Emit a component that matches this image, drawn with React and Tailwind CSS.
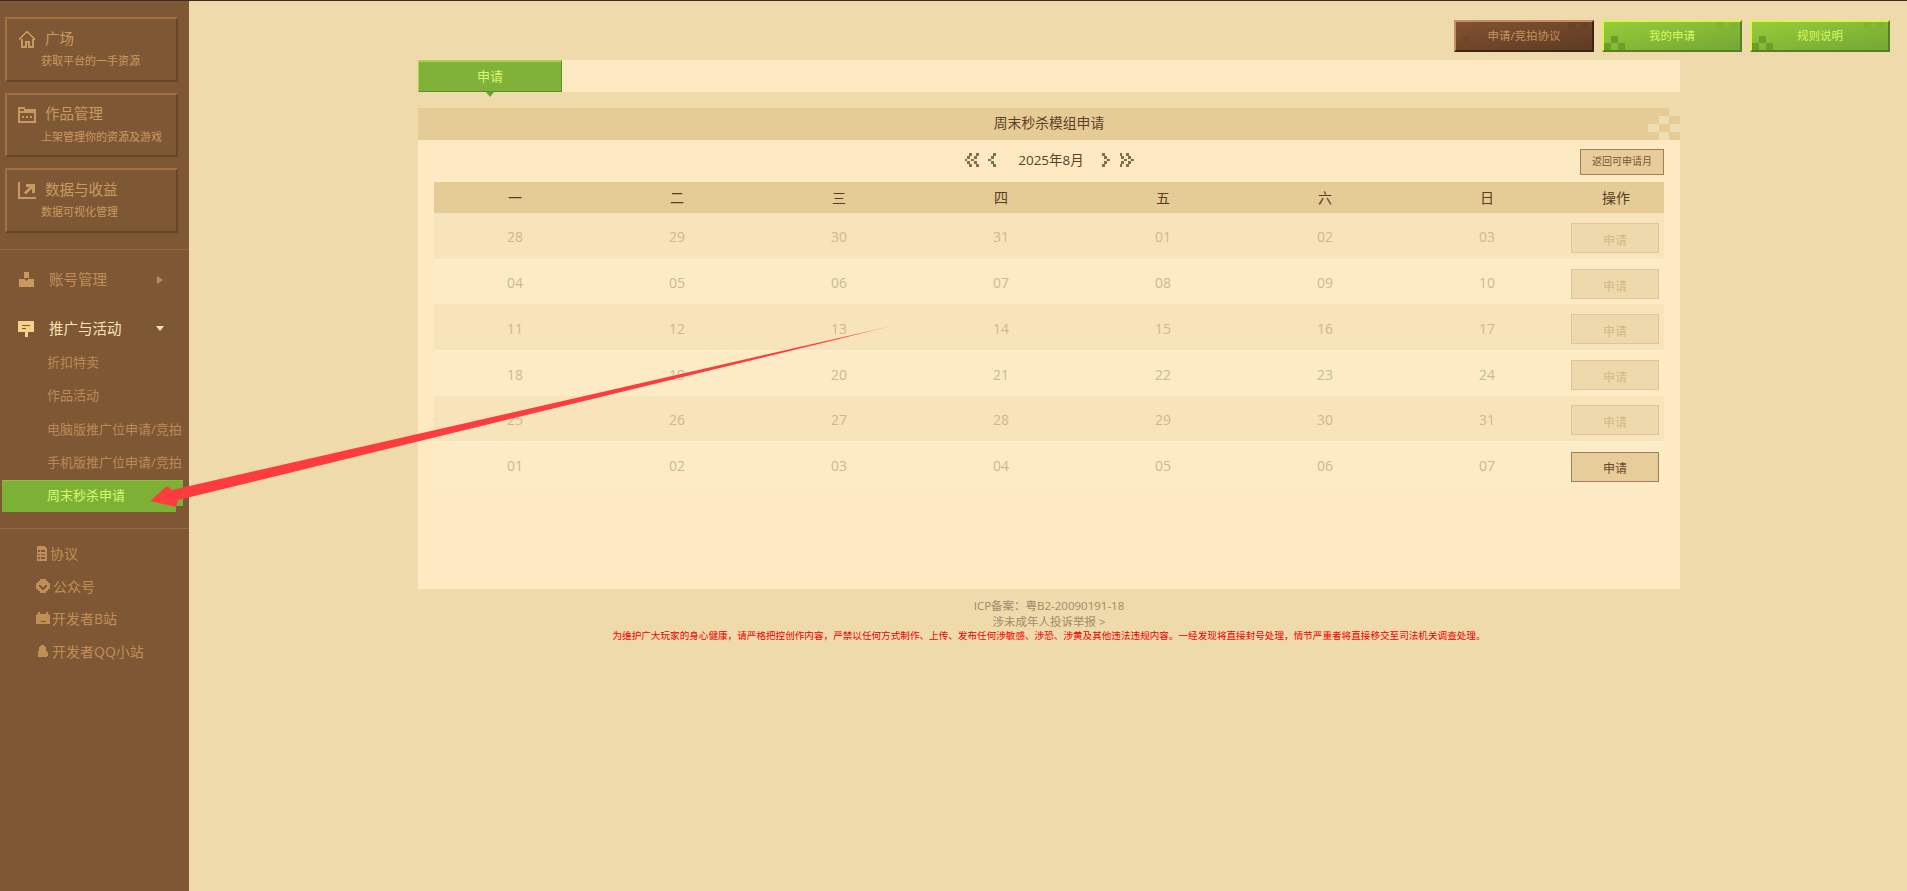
import React from 'react'

const cards = [
  { title: '广场', sub: '获取平台的一手资源', icon: 'home' },
  { title: '作品管理', sub: '上架管理你的资源及游戏', icon: 'folder' },
  { title: '数据与收益', sub: '数据可视化管理', icon: 'chart' },
]

const subMenu = ['折扣特卖', '作品活动', '电脑版推广位申请/竞拍', '手机版推广位申请/竞拍']

const weeks = [
  ['28', '29', '30', '31', '01', '02', '03'],
  ['04', '05', '06', '07', '08', '09', '10'],
  ['11', '12', '13', '14', '15', '16', '17'],
  ['18', '19', '20', '21', '22', '23', '24'],
  ['25', '26', '27', '28', '29', '30', '31'],
  ['01', '02', '03', '04', '05', '06', '07'],
]

const dayNames = ['一', '二', '三', '四', '五', '六', '日']

// 像素风图标
function Icon({ name, className }) {
  const common = { className, viewBox: '0 0 18 18', fill: 'currentColor', shapeRendering: 'crispEdges' }
  if (name === 'home') {
    return (
      <svg {...common} fill="none" stroke="currentColor" strokeWidth="2">
        <path d="M1 9.500 9 1.500l8 8" />
        <path d="M3.500 9v7.500h4v-5h3v5h4V9" />
      </svg>
    )
  }
  if (name === 'folder') {
    return (
      <svg {...common}>
        <path d="M0 1h7v2h11v14H0zM2 3v2h14V5H6V3zM2 7v8h14V7zM4 10h2v2H4zM8 10h2v2H8zM12 10h2v2h-2z" fillRule="evenodd" />
      </svg>
    )
  }
  if (name === 'chart') {
    return (
      <svg {...common}>
        <path d="M0 1h2v15h16v2H0zM8 3h9v9h-3V7.500l-6 6-2-2 6-6H8z" />
      </svg>
    )
  }
  if (name === 'account') {
    return (
      <svg {...common}>
        <path d="M6 0h6v7H6zM0 8h6l3 3 3-3h6v10H0z" />
      </svg>
    )
  }
  if (name === 'sign') {
    return (
      <svg {...common}>
        <path d="M0 0h18v12h-7v6H8v-6H0zM4 4v2h10V4zM4 8v1h5V8z" fillRule="evenodd" />
      </svg>
    )
  }
  if (name === 'doc') {
    return (
      <svg {...common}>
        <path d="M3 0h9l3 3v15H3zM5 5v2h2V5zM8 5v2h5V5zM5 9v2h2V9zM8 9v2h5V9zM5 13v2h2v-2zM8 13v2h5v-2z" fillRule="evenodd" />
      </svg>
    )
  }
  if (name === 'badge') {
    return (
      <svg {...common}>
        <path d="M6 1h6v2h3v3h2v6h-2v3h-3v2H6v-2H3v-3H1V6h2V3h3zM5 8v2h1v1h1v1h1v1h2v-1h1v-1h1v-1h1V8h-2v1h-1v1h-2V9H7V8z" fillRule="evenodd" />
      </svg>
    )
  }
  if (name === 'bili') {
    return (
      <svg {...common}>
        <path d="M3 1h2v2h1v1h6V3h1V1h2v3h1v1h1v10h-1v1H2v-1H1V5h1V4h1zM3 9v1h4V9zM11 9v1h4V9zM6 12v1h6v-1z" fillRule="evenodd" />
      </svg>
    )
  }
  // qq
  return (
    <svg {...common}>
      <path d="M7 1h4v1h1v2h1v4h1v2h1v4h-1v1h-1v1h-3v-1H8v1H5v-1H4v-1H3v-4h1V8h1V4h1V2h1z" />
    </svg>
  )
}

function Chevron({ dir, double }) {
  const path = dir === 'left'
    ? 'M5 0h3v3H5zM3 3h3v3H3zM0 6h3v3H0zM3 9h3v3H3zM5 12h3v3H5z'
    : 'M0 0h3v3H0zM2 3h3v3H2zM5 6h3v3H5zM2 9h3v3H2zM0 12h3v3H0z'
  return (
    <svg className={`${double ? 'w-[15px]' : 'w-[8px]'} h-[14px] text-[#8b6b4d]`} viewBox={double ? '0 0 15 15' : '0 0 8 15'} fill="currentColor" shapeRendering="crispEdges">
      <path d={path} />
      {double && <path d={path} transform="translate(7 0)" />}
    </svg>
  )
}

function PixelBtn({ children, tone }) {
  const brown = tone === 'brown'
  const shell = brown
    ? 'bg-gradient-to-br from-[#825232] to-[#5e3b22] border-t-[#c48f62] border-l-[#c48f62] border-b-[#3d2413] border-r-[#3d2413] text-[#c4935c]'
    : 'bg-gradient-to-br from-[#97cc38] to-[#74a735] border-t-[#d9f552] border-l-[#d9f552] border-b-[#587f24] border-r-[#587f24] text-[#d9f666]'
  const px = brown ? 'bg-[#6a4226]' : 'bg-[#83b32f]'
  const pxLow = brown ? 'bg-[#6f4629]' : 'bg-[#6f9d2a]'
  return (
    <button className={`relative w-[140px] h-[32px] border-2 text-[11.5px] ${shell}`}>
      {children}
      <span className={`absolute right-[17px] top-0 w-[7px] h-[7px] ${px}`} />
      <span className={`absolute right-[3px] top-0 w-[7px] h-[7px] ${px}`} />
      <span className={`absolute right-[10px] top-[7px] w-[7px] h-[7px] ${px}`} />
      <span className={`absolute left-[7px] bottom-[7px] w-[7px] h-[7px] ${pxLow}`} />
      <span className={`absolute left-0 bottom-0 w-[7px] h-[7px] ${pxLow}`} />
      <span className={`absolute left-[14px] bottom-0 w-[7px] h-[7px] ${pxLow}`} />
    </button>
  )
}

function Sidebar() {
  return (
    <aside className="w-[189px] shrink-0 bg-[#7e5835] flex flex-col pt-[16px]">
      <div className="pl-[5px] flex flex-col gap-[11px]">
        {cards.map(c => (
          <div key={c.title} className="w-[173px] h-[64.500px] border-2 border-t-[#a5703f] border-l-[#a5703f] border-b-[#65462a] border-r-[#65462a] pt-[11px]">
            <div className="flex items-center pl-[11px] h-[18px] text-[#c99a60]">
              <Icon name={c.icon} className="w-[18px] h-[18px]" />
              <span className="ml-[9px] text-[14.5px] leading-none">{c.title}</span>
            </div>
            <div className="pl-[34px] mt-[5px] text-[11px] leading-[16px] text-[#c99a60] whitespace-nowrap">{c.sub}</div>
          </div>
        ))}
      </div>

      <div className="h-px bg-[#98693f] mt-[16px]" />

      <div className="mt-[13px] h-[34px] flex items-center pl-[19px] pr-[26px] text-[#c08f58]">
        <Icon name="account" className="w-[15px] h-[15px] text-[#c9995f]" />
        <span className="ml-[15px] text-[14.5px]">账号管理</span>
        <span className="ml-auto w-0 h-0 border-y-[4px] border-y-transparent border-l-[6px] border-l-[#b58a5a]" />
      </div>

      <div className="mt-[15px] h-[34px] flex items-center pl-[18px] pr-[25px] text-[#f6e4b9]">
        <Icon name="sign" className="w-[16px] h-[16px] text-[#f3d28c]" />
        <span className="ml-[15px] text-[14.5px]">推广与活动</span>
        <span className="ml-auto w-0 h-0 border-x-[4.500px] border-x-transparent border-t-[5px] border-t-[#f6e4b9]" />
      </div>

      <div className="flex flex-col">
        {subMenu.map(s => (
          <div key={s} className="h-[33.500px] flex items-center pl-[47px] text-[13px] text-[#bb8a56] whitespace-nowrap">{s}</div>
        ))}
        <div className="relative ml-[2px] w-[174px] h-[32px] bg-[#7db136] border-t border-t-[#8cbd3f] flex items-center pl-[45px] text-[13px] text-[#d8f870]">
          周末秒杀申请
          <span className="absolute -right-[7px] -top-px w-[7px] h-[26px] bg-[#7db136] border-t border-t-[#8cbd3f]" />
        </div>
      </div>

      <div className="h-px bg-[#98693f] mt-[16px]" />

      <div className="mt-[9px] flex flex-col text-[14px] text-[#c08f58]">
        <div className="h-[32.500px] flex items-center pl-[34px]"><Icon name="doc" className="w-[15px] h-[17px]" /><span className="ml-px">协议</span></div>
        <div className="h-[32.500px] flex items-center pl-[35px]"><Icon name="badge" className="w-[16px] h-[16px]" /><span className="ml-[2px]">公众号</span></div>
        <div className="h-[32.500px] flex items-center pl-[35px]"><Icon name="bili" className="w-[16px] h-[15px]" /><span className="ml-px">开发者B站</span></div>
        <div className="h-[32.500px] flex items-center pl-[35px]"><Icon name="qq" className="w-[15px] h-[15px]" /><span className="ml-[2px]">开发者QQ小站</span></div>
      </div>
    </aside>
  )
}

function Calendar() {
  return (
    <div className="mx-[16px]">
      <div className="grid grid-cols-[repeat(7,162px)_96px] h-[31px] items-center text-center text-[14px] bg-[#e5cb96] text-[#5a3c22]">
        {dayNames.map(d => <div key={d}>{d}</div>)}
        <div>操作</div>
      </div>
      {weeks.map((w, i) => (
        <div
          key={i}
          className={`grid grid-cols-[repeat(7,162px)_96px] h-[45.670px] pt-[4px] items-center text-center text-[14px] text-[#cfb88f] ${i % 2 === 0 ? 'bg-[#f7e4ba]' : 'bg-[#fcebc5] border-t border-t-[#fdf0d0]'}`}
        >
          {w.map((n, j) => <div key={j} className="pb-[2px]">{n}</div>)}
          <div className="pl-[3px] text-left">
            {i === 5 ? (
              <button className="w-[88px] h-[30px] pt-[5px] bg-[#e6cd9a] border border-[#a27d58] text-[12px] leading-[18px] text-[#6b4526]">申请</button>
            ) : (
              <button className="w-[88px] h-[30px] pt-[6px] bg-[#eed9ac] border border-[#e0c49c] text-[12px] leading-[18px] text-[#d3b985]">申请</button>
            )}
          </div>
        </div>
      ))}
    </div>
  )
}

export default function App() {
  return (
    <div className="relative w-[1907px] h-[891px] overflow-hidden flex flex-col bg-[#eedaab] font-['Open_Sans','Noto_Sans_CJK_SC',sans-serif]">
      <div className="h-px bg-[#3f2b1d] shrink-0" />
      <div className="flex flex-1 min-h-0">
        <Sidebar />
        <main className="flex-1 flex flex-col">
          <div className="flex justify-end gap-[8px] pt-[19px] pr-[17px]">
            <PixelBtn tone="brown">申请/竞拍协议</PixelBtn>
            <PixelBtn>我的申请</PixelBtn>
            <PixelBtn>规则说明</PixelBtn>
          </div>

          <div className="ml-[229px] w-[1262px] mt-[8px]">
            <div className="h-[32px] bg-[#fdeac3]">
              <div className="relative w-[144px] h-[32px] bg-[#80b23a] border border-t-2 border-t-[#aed14a] border-l-[#aed14a] border-b-[#5f8e25] border-r-[#5f8e25] flex items-center justify-center text-[13px] text-[#d6f66f]">
                申请
                <span className="absolute left-[67px] -bottom-[6px] w-0 h-0 border-x-[4px] border-x-transparent border-t-[5px] border-t-[#6f9f2c]" />
              </div>
            </div>

            <div className="mt-[16px] bg-[#fdeac3] h-[481px]">
              <div className="relative h-[32px] bg-[#e5cb96] flex items-center justify-center pb-[2px] text-[13.8px] text-[#5d3f23]">
                周末秒杀模组申请
                <span className="absolute right-0 top-0 w-[11px] h-[8px] bg-[#eedaab]" />
                <span className="absolute right-[11px] top-[8px] w-[10px] h-[8px] bg-[#eedcb2]" />
                <span className="absolute right-[21px] top-[16px] w-[11px] h-[8px] bg-[#eedcb2]" />
                <span className="absolute right-0 top-[16px] w-[10px] h-[8px] bg-[#eedcb2]" />
                <span className="absolute right-[11px] top-[24px] w-[10px] h-[8px] bg-[#eedcb2]" />
              </div>

              <div className="grid grid-cols-[1fr_auto_1fr] h-[42px] px-[16px]">
                <div />
                <div className="flex items-center pb-[2px] text-[#5d3f23]">
                  <Chevron dir="left" double />
                  <span className="ml-[9px]"><Chevron dir="left" /></span>
                  <span className="ml-[22px] mr-[18px] text-[13.5px]">2025年8月</span>
                  <Chevron dir="right" />
                  <span className="ml-[9px]"><Chevron dir="right" double /></span>
                </div>
                <div className="justify-self-end pt-[7px]">
                  <button className="w-[84px] h-[26px] bg-[#e6cd9a] border border-[#a27d58] text-[10px] text-[#7b5533]">返回可申请月</button>
                </div>
              </div>

              <Calendar />
            </div>

            <div className="mt-[9px] text-center text-[11.5px] leading-[16px] text-[#a08a68]">
              <div>ICP备案：粤B2-20090191-18</div>
              <div>涉未成年人投诉举报 &gt;</div>
              <div className="text-[9.6px] leading-[12px] text-[#f00000] whitespace-nowrap">为维护广大玩家的身心健康，请严格把控创作内容，严禁以任何方式制作、上传、发布任何涉敏感、涉恐、涉黄及其他违法违规内容。一经发现将直接封号处理，情节严重者将直接移交至司法机关调查处理。</div>
            </div>
          </div>
        </main>
      </div>

      {/* 标注箭头 */}
      <svg className="absolute left-0 top-0 w-[1907px] h-[891px] pointer-events-none" viewBox="0 0 1907 891">
        <defs>
          <linearGradient id="arrowFade" gradientUnits="userSpaceOnUse" x1="893" y1="327" x2="840" y2="340">
            <stop offset="0" stopColor="#f79a90" />
            <stop offset="1" stopColor="#fe3c3d" />
          </linearGradient>
        </defs>
        <polygon points="896,325 172,490 167,486 150,501 176,507 178,500" fill="url(#arrowFade)" />
      </svg>
    </div>
  )
}
